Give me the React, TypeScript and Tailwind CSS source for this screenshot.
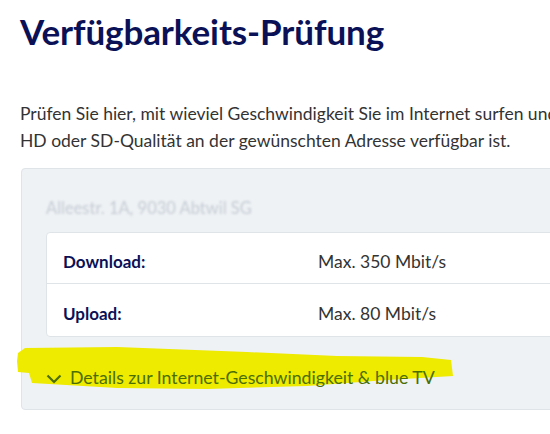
import React from "react";

export default function App() {
  return (
    <div
      className="w-[550px] h-[434px] overflow-hidden bg-white relative"
      style={{ fontFamily: "Lato, 'Noto Sans', sans-serif" }}
    >
      <div className="pl-5 pt-[9px]">
        <h1 className="text-[35px] leading-[44px] font-bold text-[#0b1157] tracking-[-0.1px]">
          Verfügbarkeits-Prüfung
        </h1>
        <p className="mt-[47px] text-[17.5px] leading-[27px] text-[#333333] whitespace-nowrap">
          Prüfen Sie hier, mit wieviel Geschwindigkeit Sie im Internet surfen und ob blue TV in
          <br />
          HD oder SD-Qualität an der gewünschten Adresse verfügbar ist.
        </p>
        <div className="mt-[14px] ml-px w-[560px] rounded-[4px] border border-[#dfe4e8] bg-[#eef2f5]">
          <div className="h-[63px] pl-[24px] pt-[27px]">
            <span className="text-[16.5px] text-[#c6ccd5] blur-[1px]">Alleestr. 1A, 9030 Abtwil SG</span>
          </div>
          <div className="ml-[24px] rounded-[4px] border border-[#dfe4e8] bg-white">
            <div className="flex h-[51px] items-center border-b border-[#dfe4e8] pt-[8px]">
              <div className="w-[271px] pl-[16px] text-[17px] font-bold text-[#0b1157]">Download:</div>
              <div className="text-[17.5px] text-[#333333]">Max. 350 Mbit/s</div>
            </div>
            <div className="flex h-[52px] items-center pt-[8px]">
              <div className="w-[271px] pl-[16px] text-[17px] font-bold text-[#0b1157]">Upload:</div>
              <div className="text-[17.5px] text-[#333333]">Max. 80 Mbit/s</div>
            </div>
          </div>
          <div className="relative h-[72px]">
            <svg
              className="absolute left-[-5px] top-[10px]"
              width="440"
              height="44"
              viewBox="0 0 440 44"
            >
              <polygon
                points="1,6 8,1 100,0 230,5 320,9 405,10 434,13 436,29 370,33 290,39 190,42 100,41 15,36 12,26 1,25 0,14"
                fill="#eeea00"
              />
            </svg>
            <div className="relative flex items-center pl-[24px] pt-[28px]">
              <svg width="16" height="10" viewBox="0 0 16 10" className="mt-[2px]">
                <path d="M1.5 1.5 L8 8 L14.5 1.5" fill="none" stroke="#4a6e00" strokeWidth="2.2" />
              </svg>
              <span className="ml-[8px] text-[17.7px] text-[#4a6e00]">
                Details zur Internet-Geschwindigkeit &amp; blue TV
              </span>
            </div>
          </div>
        </div>
      </div>
    </div>
  );
}
